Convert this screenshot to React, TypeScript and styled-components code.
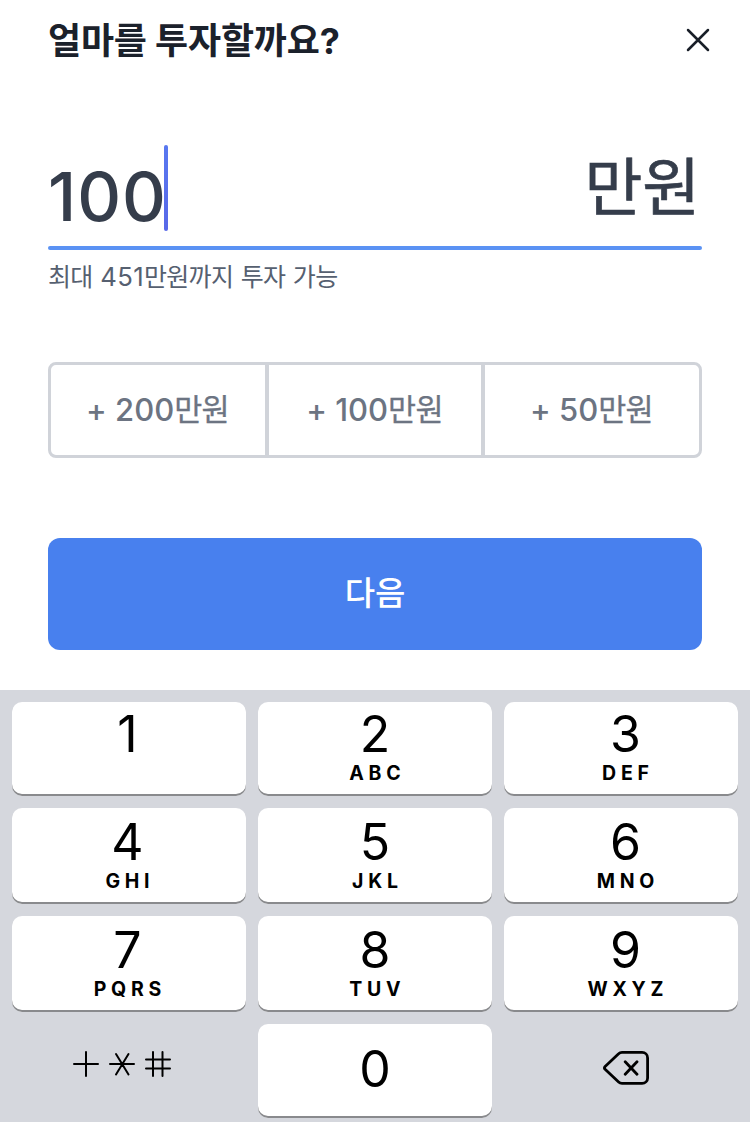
import React from "react";
import styled, { createGlobalStyle } from "styled-components";

const Global = createGlobalStyle`
  * { box-sizing: border-box; }
  body { margin: 0; background: #fff; font-family: Inter, "Noto Sans CJK KR", sans-serif; }
  button { font-family: inherit; border: 0; margin: 0; padding: 0; }
`;
const Screen = styled.main`width: 750px; height: 1122px; display: flex; flex-direction: column; overflow: hidden;`;
const Sheet = styled.section`height: 690px; padding: 0 48px; display: flex; flex-direction: column;`;
const Header = styled.header`height: 80px; display: flex; align-items: center; justify-content: space-between; margin-right: -16px;`;
const Title = styled.h1`margin: 0; padding-top: 2px; font-size: 36px; font-weight: 700; line-height: 44px; letter-spacing: -0.2px; color: #1b212b; white-space: nowrap;`;
const Close = styled.button`width: 40px; height: 40px; background: none; display: grid; place-items: center;`;
const AmountField = styled.div`height: 166px; padding-top: 65px; display: flex; justify-content: space-between; color: #353d4b;`;
const Underline = styled.div`height: 4px; border-radius: 2px; background: #5a92f4;`;
const Amount = styled.div`display: flex; height: 86px; font-size: 68px; line-height: 102px; font-weight: 500; letter-spacing: 1px;`;
const Caret = styled.span`width: 4px; height: 86px; margin-left: -3px; border-radius: 2px; background: linear-gradient(#5878f0, #5868e8);`;
const Unit = styled.div`margin-right: 2px; font-size: 63px; line-height: 85px; font-weight: 400; letter-spacing: -0.2px; -webkit-text-stroke: 0.7px;`;
const Hint = styled.p`margin: 10px 0 0; height: 32px; font-size: 25px; line-height: 34px; letter-spacing: -0.7px; word-spacing: 1.2px; color: #566070; white-space: nowrap;`;
const HintNumber = styled.span`font-size: 25.7px; letter-spacing: 0.4px;`;
const QuickAmounts = styled.div`margin-top: 70px; height: 96px; display: grid; grid-template-columns: 214px 220px 214px; border: 3px solid #d0d3d9; border-radius: 8px;`;
const QuickButton = styled.button`
  background: transparent; color: #6c7482; font-size: 31px; font-weight: 500; letter-spacing: 0; padding: 0 1px 4px 0; white-space: nowrap;
  &:nth-child(2) { border: solid #d0d3d9; border-width: 0 4px; }
`;
const QuickUnit = styled.span`font-weight: 400; font-size: 30.5px; letter-spacing: -0.7px; -webkit-text-stroke: 0.3px;`;
const Next = styled.button`margin-top: 80px; height: 112px; padding-bottom: 6px; border-radius: 12px; background: #4880ee; color: #fff; font-size: 33px; font-weight: 500;`;
const Keypad = styled.section`height: 432px; padding: 12px; background: #d5d7dd; display: grid; grid-template-columns: repeat(3, 234px); grid-template-rows: 94px 96px 96px 94px; gap: 12px;`;
const Key = styled.button<{ $pad: string }>`
  background: #fff; border-radius: 10px; color: #000; box-shadow: inset 0 -2px #898a8d;
  display: flex; flex-direction: column; align-items: center; justify-content: flex-start; padding: ${p => p.$pad};
`;
const ToolKey = styled(Key)`background: transparent; box-shadow: none;`;
const Digit = styled.span`font-size: 50px; line-height: 58px;`;
const Letters = styled.span`font-size: 19.5px; line-height: 20px; font-weight: 700; letter-spacing: 4.7px; margin-right: -4.7px;`;
const keys = [["1",""],["2","ABC"],["3","DEF"],["4","GHI"],["5","JKL"],["6","MNO"],["7","PQRS"],["8","TUV"],["9","WXYZ"]];
const keyPadding = (i: number) => {
  const top = i < 3 ? 3 : 5;
  return [`${top}px 3px 0 0`, `${top}px 0 0`, `${top}px 0 0 9px`][i % 3];
};

export default function App() {
  return <><Global /><Screen>
    <Sheet>
      <Header><Title>얼마를 투자할까요?</Title><Close aria-label="닫기"><svg width="24" height="24" fill="none" stroke="#191f28" strokeWidth="2.5" strokeLinecap="round"><path d="M2 2l20 20M22 2L2 22" /></svg></Close></Header>
      <AmountField><Amount>100<Caret /></Amount><Unit>만원</Unit></AmountField>
      <Underline />
      <Hint>최대 <HintNumber>451</HintNumber>만원까지 투자 가능</Hint>
      <QuickAmounts>{[200,100,50].map(n => <QuickButton key={n}>+ {n}<QuickUnit>만원</QuickUnit></QuickButton>)}</QuickAmounts>
      <Next>다음</Next>
    </Sheet>
    <Keypad>
      {keys.map(([d,l], i) => <Key key={d} $pad={keyPadding(i)}><Digit>{d}</Digit><Letters>{l}</Letters></Key>)}
      <ToolKey $pad="27px 14px 0 0" aria-label="기호"><svg width="98" height="26" fill="none" stroke="#000" strokeWidth="2" strokeLinecap="round"><path d="M1 13h24M13 1v24M37 13h24M43 3l12.5 20.5M55.5 3L43 23.5M73 8.5h24M73 17.5h24M80 1v24M89.5 1v24" /></svg></ToolKey>
      <Key $pad="16px 0 0"><Digit>0</Digit></Key>
      <ToolKey $pad="26px 0 0 10px" aria-label="지우기"><svg width="48" height="36" fill="none" stroke="#000" strokeWidth="2.8" strokeLinecap="round" strokeLinejoin="round"><path d="M20 2.4h20.1a5.5 5.5 0 0 1 5.5 5.5v20a5.5 5.5 0 0 1-5.5 5.5H20q-2 0-3.4-1.4L3.1 19.3q-1.3-1.4 0-2.8L16.6 3.8Q18 2.4 20 2.4zM23.2 11.8l11.8 12.4M35 11.8L23.2 24.2" /></svg></ToolKey>
    </Keypad>
  </Screen></>;
}
